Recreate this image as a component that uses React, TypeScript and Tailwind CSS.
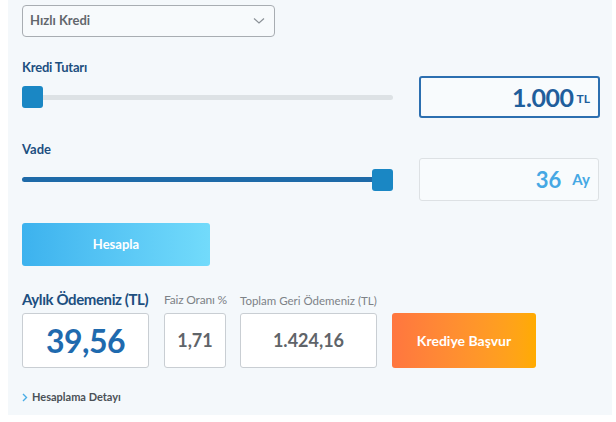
import React from "react";

const font = { fontFamily: "Lato, 'Noto Sans', sans-serif" };

function Slider({ pct, filled }: { pct: number; filled: boolean }) {
  return (
    <div className="relative w-[371px] h-[42px] flex items-center">
      <div className={`h-[5px] w-full rounded-full ${filled ? "bg-[#1e6aa8]" : "bg-[#dde2e5]"}`} />
      <div
        className="absolute top-[10px] w-[21px] h-[22px] rounded-[3px] bg-[#1a87c4]"
        style={{ left: `${pct * (371 - 21)}px` }}
      />
    </div>
  );
}

export default function App() {
  return (
    <div className="w-[616px] h-[422px] bg-white" style={font}>
      <div className="ml-2 w-[604px] h-[415px] bg-[#f4f8fb] pl-[14px] pt-[5px] flex flex-col">
        <div className="w-[253px] h-[32px] border border-[#a8adb2] rounded-[4px] bg-[#f7fafc] flex items-center justify-between pl-[7px] pr-[9px]">
          <span className="text-[13px] font-bold text-[#62676c]">Hızlı Kredi</span>
          <svg width="12" height="8" viewBox="0 0 12 8" fill="none">
            <path d="M1 1.5 L6 6 L11 1.5" stroke="#8a9096" strokeWidth="1.2" />
          </svg>
        </div>

        <div className="mt-[23px] h-[16px] flex items-center text-[13px] font-bold text-[#1d4f80] tracking-[-0.2px]">Kredi Tutarı</div>
        <div className="flex items-center gap-[26px]">
          <Slider pct={0} filled={false} />
          <div className="w-[181px] h-[42px] border-2 border-[#2c6fb0] rounded-[3px] bg-[#f8fbfd] flex items-center justify-end pr-[8px]">
            <span className="text-[25px] font-bold text-[#1f5e9c] tracking-[-0.5px] leading-none">1.000</span>
            <span className="ml-[3px] mt-[3px] text-[12px] font-bold text-[#1f5e9c] leading-none">TL</span>
          </div>
        </div>

        <div className="mt-[24px] h-[16px] flex items-center text-[13px] font-bold text-[#1d4f80]">Vade</div>
        <div className="flex items-center gap-[26px]">
          <Slider pct={1} filled={true} />
          <div className="w-[180px] h-[43px] border border-[#dde1e4] rounded-[3px] bg-[#f8fbfd] flex items-center justify-end pr-[8px]">
            <span className="text-[22px] font-bold text-[#46a8e4] leading-none">36</span>
            <span className="ml-[11px] text-[15px] font-bold text-[#46a8e4] leading-none">Ay</span>
          </div>
        </div>

        <div className="mt-[22px] w-[188px] h-[43px] rounded-[3px] bg-gradient-to-r from-[#3cb2ee] to-[#72dbfb] flex items-center justify-center text-white text-[13px] font-bold">
          Hesapla
        </div>

        <div className="mt-[22px] flex">
          <div className="w-[127px] flex flex-col">
            <div className="h-[25px] flex items-end pb-[3px] text-[15px] font-bold text-[#1d4f80] whitespace-nowrap tracking-[-0.4px]">Aylık Ödemeniz (TL)</div>
            <div className="w-[127px] h-[55px] border border-[#c9ced3] rounded-[3px] bg-white flex items-center justify-center">
              <span className="text-[32px] font-bold text-[#1f6aae] tracking-[-0.5px]">39,56</span>
            </div>
          </div>
          <div className="w-[62px] flex flex-col ml-[15px]">
            <div className="h-[25px] flex items-end pb-[4px] text-[12px] text-[#7d8287] whitespace-nowrap tracking-[-0.2px]">Faiz Oranı %</div>
            <div className="w-[62px] h-[55px] border border-[#c9ced3] rounded-[3px] bg-white flex items-center justify-center">
              <span className="text-[18px] font-bold text-[#5f6469]">1,71</span>
            </div>
          </div>
          <div className="w-[137px] flex flex-col ml-[14px]">
            <div className="h-[25px] flex items-end pb-[4px] text-[11.5px] text-[#7d8287] whitespace-nowrap">Toplam Geri Ödemeniz (TL)</div>
            <div className="w-[137px] h-[55px] border border-[#c9ced3] rounded-[3px] bg-white flex items-center justify-center">
              <span className="text-[18px] font-bold text-[#5f6469]">1.424,16</span>
            </div>
          </div>
          <div className="w-[144px] flex flex-col ml-[15px]">
            <div className="h-[25px]" />
            <div className="w-[144px] h-[55px] rounded-[3px] bg-gradient-to-r from-[#ff763f] to-[#ffab00] flex items-center justify-center text-white text-[14px] font-bold">
              Krediye Başvur
            </div>
          </div>
        </div>

        <div className="mt-[21px] flex items-center gap-[4px]">
          <svg width="6" height="9" viewBox="0 0 6 9" fill="none">
            <path d="M1 1 L4.5 4.5 L1 8" stroke="#4aaee6" strokeWidth="1.4" />
          </svg>
          <span className="text-[11px] font-bold text-[#4b5157]">Hesaplama Detayı</span>
        </div>
      </div>
    </div>
  );
}
